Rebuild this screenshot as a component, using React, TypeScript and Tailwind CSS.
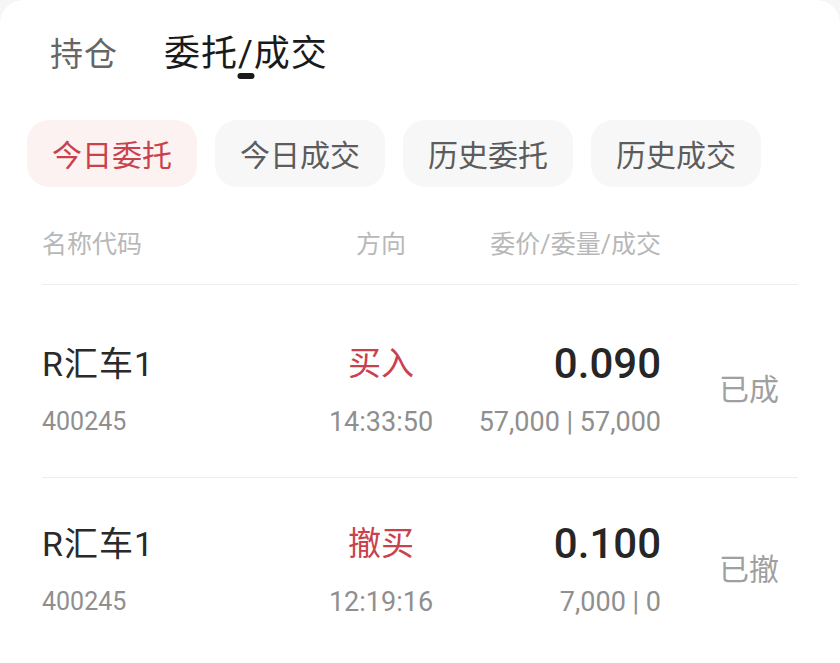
const cjk = '[font-family:Roboto,"Noto_Sans_CJK_SC",sans-serif]';

const chips = ['今日委托', '今日成交', '历史委托', '历史成交'];

const orders = [
  { name: 'R汇车1', code: '400245', side: '买入', time: '14:33:50', price: '0.090', qty: '57,000 | 57,000', status: '已成' },
  { name: 'R汇车1', code: '400245', side: '撤买', time: '12:19:16', price: '0.100', qty: '7,000 | 0', status: '已撤' },
];

export default function App() {
  return (
    <div className={`w-[840px] h-[663px] bg-[#f6f6f6] overflow-hidden ${cjk}`}>
      <div className="h-full bg-white rounded-t-[24px]">
        {/* top tabs */}
        <div className="flex items-center h-[108px] pl-[50px] gap-[46px]">
          <span className="text-[33px] leading-none tracking-[1px] text-[#666]">持仓</span>
          <div className="relative">
            <span className="text-[36px] leading-none tracking-[1px] text-[#1a1a1a]">委托/成交</span>
            <span className="absolute left-1/2 -translate-x-1/2 -bottom-[6px] w-[17px] h-[6px] rounded-full bg-[#1a1a1a]" />
          </div>
        </div>

        {/* filter chips */}
        <div className="flex gap-[18px] pl-[27px] mt-[12px]">
          {chips.map((c, i) => (
            <div
              key={c}
              className={`w-[170px] h-[67px] rounded-[22px] flex items-center justify-center text-[30px] pt-[4px] ${
                i === 0 ? 'bg-[#fdf2f2] text-[#c9424b]' : 'bg-[#f7f7f7] text-[#5c5c5c]'
              }`}
            >
              {c}
            </div>
          ))}
        </div>

        {/* list */}
        <div className="px-[42px] mt-[40px]">
          <div className="grid grid-cols-[240px_198px_181px_1fr] items-center text-[25px] leading-[36px] text-[#b8b8b8] border-b border-[#ededed] pb-[21px]">
            <span>名称代码</span>
            <span className="text-center">方向</span>
            <span className="text-right">委价/委量/成交</span>
            <span />
          </div>

          {orders.map((o, i) => (
            <div
              key={i}
              className={`grid grid-cols-[240px_198px_181px_1fr] items-start ${
                i === 0 ? 'border-b border-[#ededed] pt-[61px] pb-[41px]' : 'pt-[48px]'
              }`}
            >
              <div className="flex flex-col gap-[26px]">
                <span className="text-[34px] leading-[36px] tracking-[1px] text-[#2a2a2a]">{o.name}</span>
                <span className="text-[25px] leading-[28px] text-[#8f8f8f]">{o.code}</span>
              </div>
              <div className="flex flex-col items-center gap-[26px]">
                <span className="text-[33px] leading-[36px] text-[#c9424b]">{o.side}</span>
                <span className="text-[27px] leading-[28px] text-[#8f8f8f]">{o.time}</span>
              </div>
              <div className="flex flex-col items-end gap-[26px] whitespace-nowrap">
                <span className="text-[42px] leading-[36px] font-medium text-[#262626]">{o.price}</span>
                <span className="text-[27px] leading-[28px] text-[#8f8f8f]">{o.qty}</span>
              </div>
              <span className="pl-[58px] mt-[26px] text-[30px] leading-[36px] text-[#a0a0a0]">{o.status}</span>
            </div>
          ))}
        </div>
      </div>
    </div>
  );
}
